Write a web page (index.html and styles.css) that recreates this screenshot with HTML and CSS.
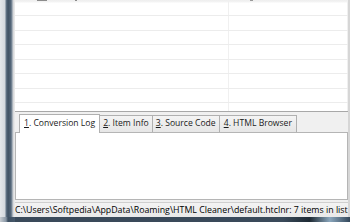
FILE: index.html
```html
<!DOCTYPE html>
<html>
<head>
<meta charset="utf-8">
<link rel="stylesheet" href="styles.css">
</head>
<body>
<div class="window">
  <div class="frame-left"></div>
  <div class="main">
    <div class="list">
      <div class="row first">
        <div class="cell"><span class="mark m1"></span><span class="mark m2"></span></div>
        <div class="cell"><span class="mark m3"></span></div>
      </div>
      <div class="row"><div class="cell"></div><div class="cell"></div></div>
      <div class="row"><div class="cell"></div><div class="cell"></div></div>
      <div class="row"><div class="cell"></div><div class="cell"></div></div>
      <div class="row"><div class="cell"></div><div class="cell"></div></div>
      <div class="row"><div class="cell"></div><div class="cell"></div></div>
      <div class="row"><div class="cell"></div><div class="cell"></div></div>
      <div class="row last"><div class="cell"></div><div class="cell"></div></div>
    </div>
    <div class="tabstrip">
      <div class="tab active"><u>1</u>. Conversion Log</div>
      <div class="tab"><u>2</u>. Item Info</div>
      <div class="tab"><u>3</u>. Source Code</div>
      <div class="tab wide"><u>4</u>. HTML Browser</div>
    </div>
    <div class="panel"></div>
    <div class="status">C:\Users\Softpedia\AppData\Roaming\HTML Cleaner\default.htclnr: 7 items in list</div>
  </div>
</div>
<div class="frame-bottom"><div class="fb-left"></div><div class="fb-right"></div></div>
</body>
</html>
```
FILE: styles.css
```css
html, body {
  margin: 0;
  padding: 0;
}
body {
  width: 350px;
  height: 222px;
  overflow: hidden;
  background: #3c4c5c;
  font-family: "Open Sans", "Noto Sans", sans-serif;
  display: flex;
  flex-direction: column;
}
.window {
  display: flex;
  height: 217px;
}
.frame-left {
  width: 15px;
  flex: none;
  background: linear-gradient(to right, #e4e7ea 0, #d3d8dd 5px, #66788a 6px, #3e5062 8px, #56687a 11px, #8a98a6 12px, #c9ccd0 13px, #e8e8e8 14px, #e8e8e8 15px);
}
.main {
  flex: 1;
  display: flex;
  flex-direction: column;
  background: #f0f0f0;
  border-right: 2px solid #d6d6d6;
}
.list {
  height: 112px;
  background: #fff;
  border-bottom: 1px solid #a8a8a8;
  box-sizing: border-box;
  overflow: hidden;
}
.row {
  display: grid;
  grid-template-columns: 214px 1fr;
  height: 14.5px;
  border-bottom: 1px solid #ececec;
  box-sizing: border-box;
}
.row.first {
  height: 16px;
  background: linear-gradient(to bottom, #eeeeee 0, #f4f4f4 2px, #ffffff 3px);
}
.row.last {
  border-bottom: none;
}
.cell {
  position: relative;
  border-right: 1px solid #f0f0f0;
}
.mark {
  position: absolute;
  top: 0;
  height: 1px;
  background: #8c8c8c;
}
.m1 { left: 22px; width: 10px; }
.m2 { left: 60px; width: 2px; }
.m3 { left: 21px; width: 3px; background: #9a9a9a; }
.tabstrip {
  height: 21px;
  display: flex;
  align-items: flex-end;
  padding-left: 4px;
  background: #f0f0f0;
  border-bottom: 1px solid #b5b5b5;
  box-sizing: border-box;
}
.tab {
  height: 17px;
  box-sizing: border-box;
  border: 1px solid #b0b0b0;
  border-bottom: none;
  margin-left: -1px;
  padding: 0 3px 0 3px;
  font-size: 8.6px;
  line-height: 15px;
  color: #1a1a1a;
  background: linear-gradient(to bottom, #f4f4f4, #e6e6e6);
  white-space: nowrap;
}
.tab.wide {
  padding: 0 4px 0 4px;
}
.tab:first-child {
  margin-left: 0;
}
.tab.active {
  height: 19px;
  margin-bottom: -1px;
  background: #ffffff;
  padding: 0 4px 0 4px;
  line-height: 17px;
  position: relative;
  z-index: 1;
}
.tab u {
  text-decoration-thickness: 1px;
  text-underline-offset: 1px;
}
.panel {
  flex: 1;
  background: #ffffff;
  border: 1px solid #b5b5b5;
  border-top: none;
  margin: 0 0 2px 0;
}
.status {
  height: 15px;
  box-sizing: border-box;
  border-top: 1px solid #cfcfcf;
  background: linear-gradient(to bottom, #f3f3f3, #e9e9e9);
  font-size: 8.8px;
  line-height: 14px;
  padding-left: 0;
  color: #000;
  white-space: nowrap;
  overflow: hidden;
}
.frame-bottom {
  flex: 1;
  display: flex;
  background: linear-gradient(to bottom, #516274, #2c3a48);
}
.fb-left {
  width: 15px;
  background: linear-gradient(to right, #c8cdd2 0, #8896a4 6px, #3e5062 8px, #46586a 15px);
}
.fb-right {
  flex: 1;
  background: linear-gradient(to right, #3a4a5a 0, #3a4a5a 80%, #1e2a34 88%, #8aa6bc 94%, #33475a 100%);
}
```
